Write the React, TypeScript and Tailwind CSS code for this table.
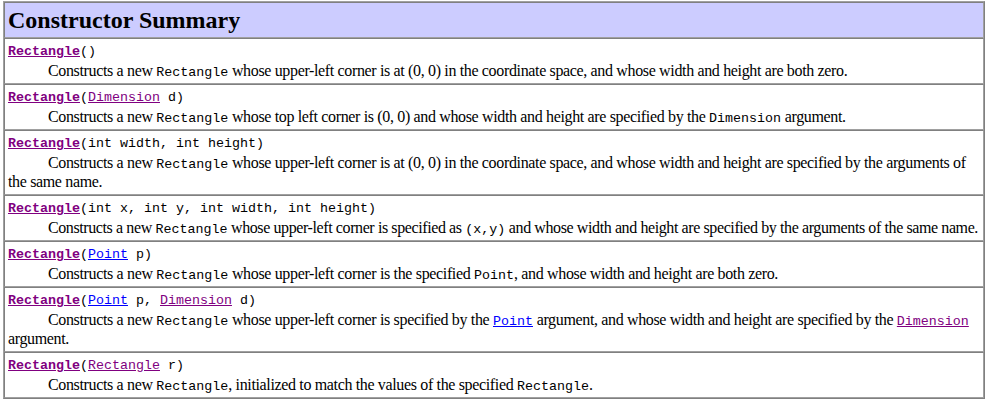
import React from "react";

const serif = "font-['Liberation_Serif','Times_New_Roman',serif]";
const mono = "font-['Liberation_Mono','Courier_New',monospace] text-[13.33px] leading-[14px] tracking-normal";

function L({ c, children, bold }: { c: "p" | "b"; children: React.ReactNode; bold?: boolean }) {
  return (
    <a
      href="#"
      className={`underline ${c === "p" ? "text-[#800080]" : "text-[#0000ff]"} ${bold ? "font-bold" : ""}`}
    >
      {children}
    </a>
  );
}

function C({ children }: { children: React.ReactNode }) {
  return <code className={mono}>{children}</code>;
}

type Row = { sig: React.ReactNode; desc: React.ReactNode; tight?: boolean };

const rows: Row[] = [
  {
    sig: <>()</>,
    desc: (
      <>
        Constructs a new <C>Rectangle</C> whose upper-left corner is at (0, 0) in the coordinate space, and whose width and height are both zero.
      </>
    ),
  },
  {
    sig: (
      <>
        (<L c="p">Dimension</L>&nbsp;d)
      </>
    ),
    desc: (
      <>
        Constructs a new <C>Rectangle</C> whose top left corner is (0, 0) and whose width and height are specified by the <C>Dimension</C> argument.
      </>
    ),
  },
  {
    sig: <>(int&nbsp;width, int&nbsp;height)</>,
    desc: (
      <>
        Constructs a new <C>Rectangle</C> whose upper-left corner is at (0, 0) in the coordinate space, and whose width and height are specified by the arguments of the same name.
      </>
    ),
  },
  {
    sig: <>(int&nbsp;x, int&nbsp;y, int&nbsp;width, int&nbsp;height)</>,
    tight: true,
    desc: (
      <>
        Constructs a new <C>Rectangle</C> whose upper-left corner is specified as <C>(x,y)</C> and whose width and height are specified by the arguments of the same name.
      </>
    ),
  },
  {
    sig: (
      <>
        (<L c="b">Point</L>&nbsp;p)
      </>
    ),
    desc: (
      <>
        Constructs a new <C>Rectangle</C> whose upper-left corner is the specified <C>Point</C>, and whose width and height are both zero.
      </>
    ),
  },
  {
    sig: (
      <>
        (<L c="b">Point</L>&nbsp;p, <L c="p">Dimension</L>&nbsp;d)
      </>
    ),
    desc: (
      <>
        Constructs a new <C>Rectangle</C> whose upper-left corner is specified by the{" "}
        <C>
          <L c="b">Point</L>
        </C>{" "}
        argument, and whose width and height are specified by the{" "}
        <C>
          <L c="p">Dimension</L>
        </C>{" "}
        argument.
      </>
    ),
  },
  {
    sig: (
      <>
        (<L c="p">Rectangle</L>&nbsp;r)
      </>
    ),
    desc: (
      <>
        Constructs a new <C>Rectangle</C>, initialized to match the values of the specified <C>Rectangle</C>.
      </>
    ),
  },
];

const cell =
  "p-[3px] border border-t-[#808080] border-l-[#808080] border-b-[#a0a0a0] border-r-[#a0a0a0] text-left align-top";

export default function App() {
  return (
    <div className={`bg-white w-[988px] h-[401px] pl-[3px] pt-[1px] ${serif} text-black text-[16px] leading-[19px]`}>
      <table className="w-[982px] border-separate border-spacing-0 border border-t-[#a0a0a0] border-l-[#a0a0a0] border-b-[#808080] border-r-[#808080]">
        <tbody>
          <tr className="bg-[#ccccff]">
            <th className={cell}>
              <div className="text-[24px] leading-[28px] font-bold">Constructor Summary</div>
            </th>
          </tr>
          {rows.map((r, i) => (
            <tr key={i} className="bg-white">
              <td className={cell}>
                <div className="font-['Liberation_Mono','Courier_New',monospace] text-[13.33px] leading-[19px]">
                  <b>
                    <L c="p">Rectangle</L>
                  </b>
                  {r.sig}
                </div>
                <div
                  className={
                    r.tight
                      ? "indent-[40px] tracking-[-0.4px] whitespace-nowrap"
                      : "indent-[40px] tracking-[-0.35px]"
                  }
                >
                  {r.desc}
                </div>
              </td>
            </tr>
          ))}
        </tbody>
      </table>
    </div>
  );
}
